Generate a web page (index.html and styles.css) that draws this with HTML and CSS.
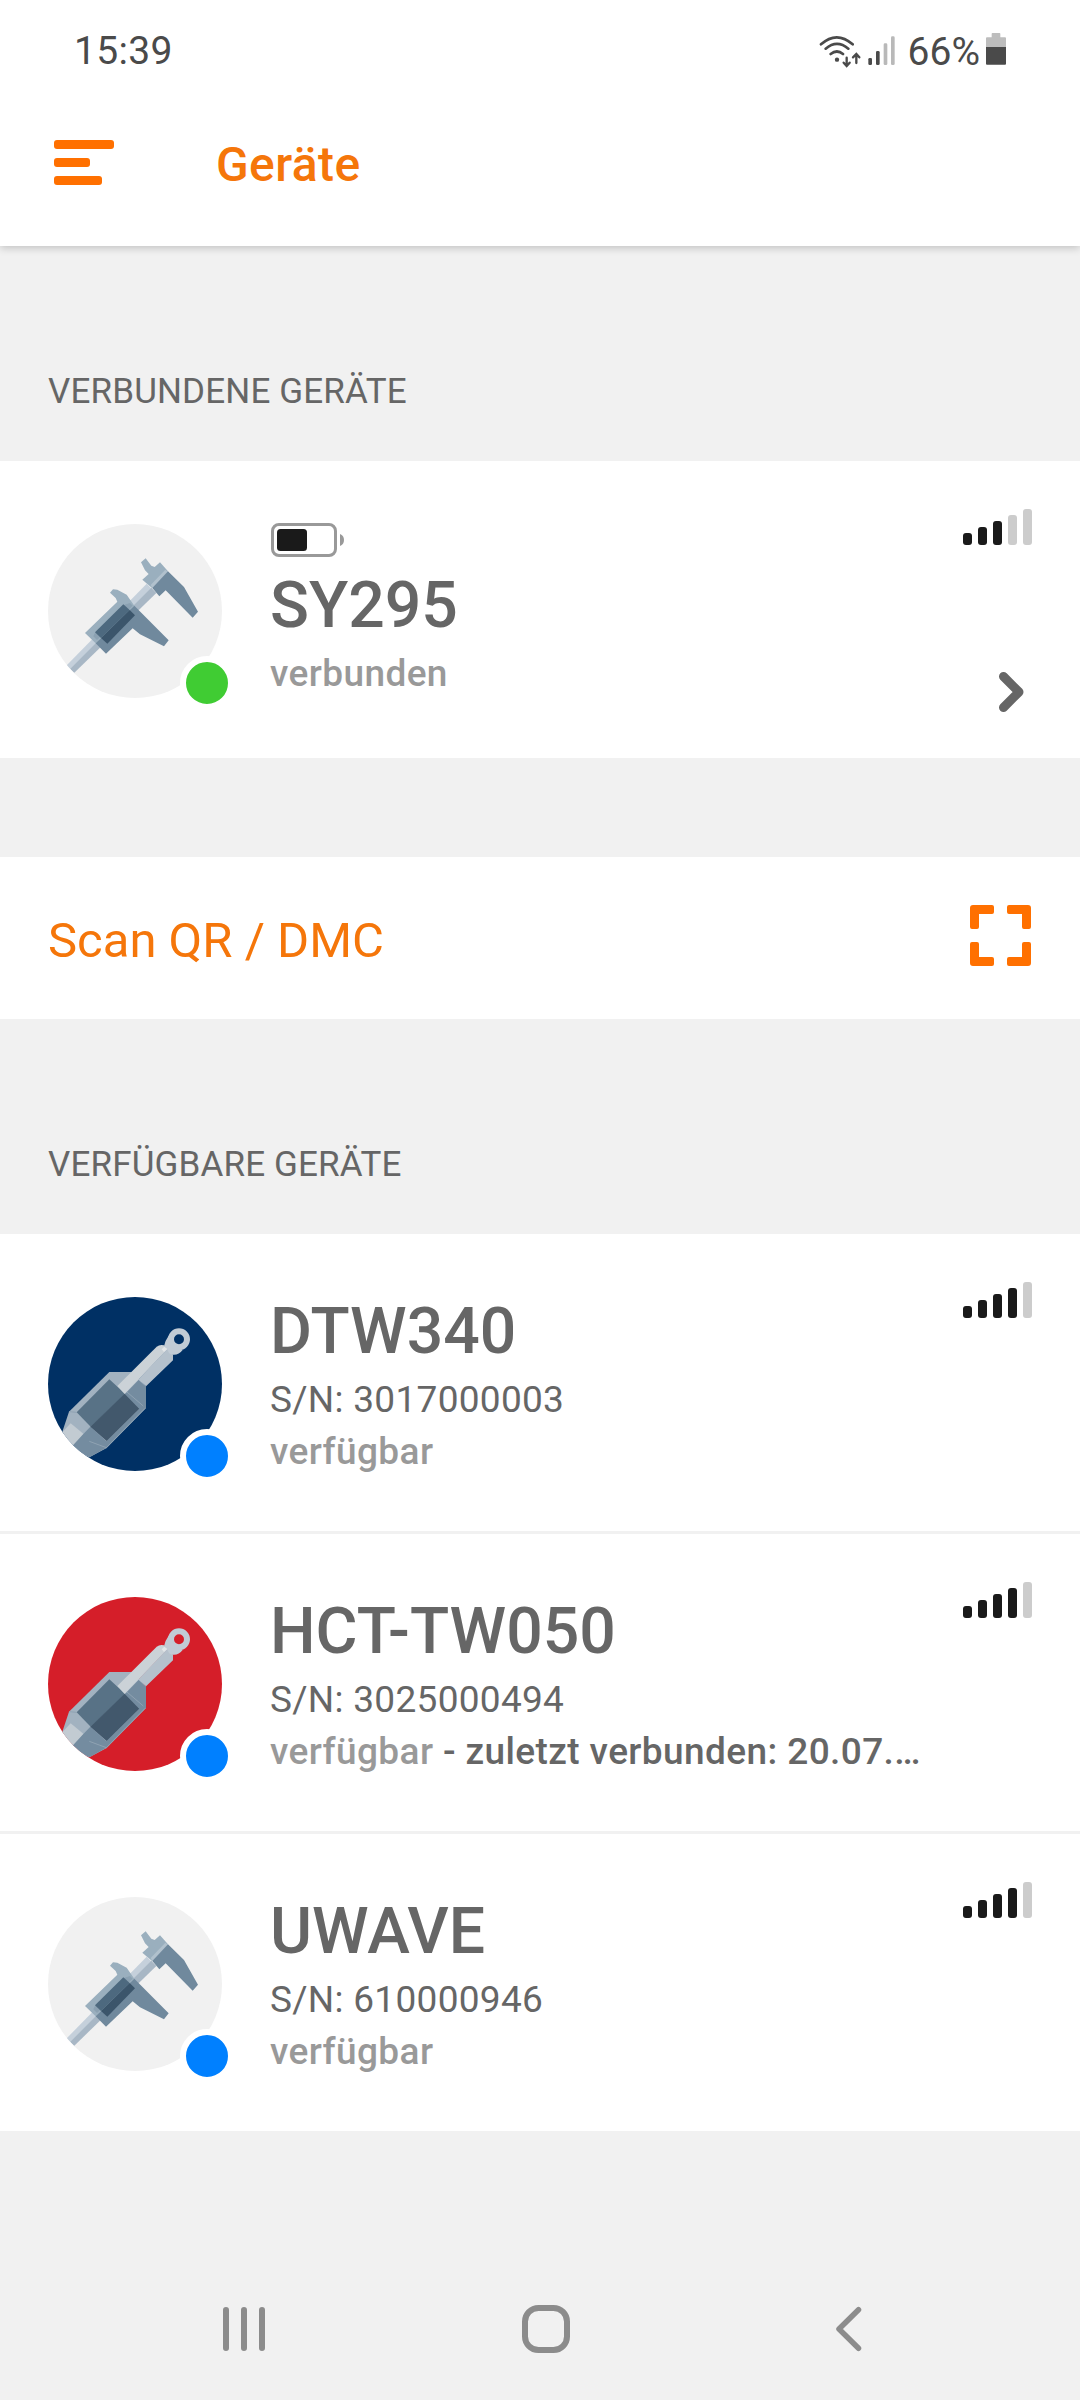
FILE: index.html
```html
<!DOCTYPE html>
<html lang="de">
<head>
<meta charset="utf-8">
<title>Geräte</title>
<link rel="stylesheet" href="styles.css">
</head>
<body>
<svg class="defs" width="0" height="0" aria-hidden="true">
  <defs>
    <symbol id="caliper" viewBox="54 71 522 522">
      <path fill="#c5d0db" d="M108 497 350 250 366 266 121 506z"/>
      <path fill="#a8b7c5" d="M120 506 364 262 379 278 133 517z"/>
      <path fill="#9aafbe" d="M165 398 262 304 257 293 240 277 249 267 262 268 290 283 313 316 197 429z"/>
      <path fill="#70899d" d="M197 429 313 316 416 420 402 438 330 402 308 384 228 460z"/>
      <path fill="#8ba1b2" d="M300 308 308 316 201 419 190 408 195 397 283 313z"/>
      <path fill="#4d697f" d="M195 396 280 312 299 329 213 413z"/>
      <path fill="#3b556b" d="M213 413 299 329 315 345 232 430z"/>
      <path fill="#9aafbe" d="M347 174 333 186 345 210 356 221 337 238 367 264 414 213 390 186 374 200 364 196z"/>
      <path fill="#b1c1cd" d="M362 254 406 208 414 215 368 264z"/>
      <path fill="#70899d" d="M367 263 414 213 462 260 504 334 488 352 407 270 388 288z"/>
    </symbol>
    <symbol id="holder" viewBox="54 81 522 522">
      <path fill="#a2b2c0" d="M92 500 117 425 238 306H308L348 350V414L230 534 178 562 132 545z"/>
      <path fill="#748ca0" d="M326 329 348 350V413L229 533 178 562 122 532 181 470 229 514 328 416 284 372z"/>
      <path fill="none" stroke="#8fa2b2" stroke-width="3" d="M345 415 229 533 178 514M272 350 340 408M140 427 117 425"/>
      <path fill="#c2cbd2" d="M92 492 122 460 160 491 127 528z"/>
      <path fill="#587286" d="M238 328 286 372 182 470 140 427z"/>
      <path fill="#42586c" d="M284 371 328 416 230 513 181 470z"/>
      <path fill="#cbd2d7" d="M262 348 380 230Q390 222 402 226L413 238 284 372z"/>
      <path fill="#b5c1cc" d="M284 371 411 238 429 254V271L348 349 326 329z"/>
      <path fill="#c1cbd5" d="M416 197Q406 210 402 229L414 242Q416 252 428 254 446 256 458 240L432 225z"/>
      <circle cx="447" cy="208" r="24" fill="none" stroke="#c1cbd5" stroke-width="18"/>
      <path fill="#e3e6e8" d="m403 230 9 7-10 9-7-8z"/>
    </symbol>
  </defs>
</svg>

<div class="screen">
  <header class="header">
    <div class="status-bar">
      <span class="clock">15:39</span>
      <div class="status-icons">
        <svg class="wifi" viewBox="114 96 126 99" fill="none" stroke="#4a4a4a" stroke-width="8" stroke-linecap="round">
          <path d="M120 124Q167 82 215 124M134 137Q168 108 202 137M149 153Q168 138 186 153"/>
          <circle cx="168" cy="170" r="6.5" fill="#4a4a4a" stroke="none"/>
          <path stroke-width="7" d="M197 164V187M188 179 197 189 206 179M226 180V155M216 163 226 153 235 163"/>
        </svg>
        <svg class="cell" viewBox="261 105 81 90">
          <rect x="262" y="171" width="11" height="21" rx="4" fill="#4a4a4a"/>
          <rect x="285" y="150" width="11" height="42" rx="4" fill="#4a4a4a"/>
          <rect x="308" y="127" width="11" height="65" rx="4" fill="#b9b9b9"/>
          <rect x="330" y="106" width="11" height="86" rx="4" fill="#b9b9b9"/>
        </svg>
        <span class="percent">66%</span>
        <svg class="power" viewBox="618 99 60 96">
          <path fill="#bdbdbd" d="M637 99H659Q661 99 661 102V112H675Q678 112 678 115V142H618V115Q618 112 621 112H635V102Q635 99 637 99z"/>
          <path fill="#4a4a4a" d="M618 141H678V191Q678 194 675 194H621Q618 194 618 191z"/>
        </svg>
      </div>
    </div>
    <div class="app-bar">
      <div class="menu"><i class="line long"></i><i class="line short"></i><i class="line medium"></i></div>
      <h1 class="title">Geräte</h1>
    </div>
  </header>

  <main>
    <h2 class="section">VERBUNDENE GERÄTE</h2>
    <section class="list">
      <article class="device connected">
        <div class="avatar grey"><svg class="picture"><use href="#caliper"/></svg><i class="dot green"></i></div>
        <div class="info">
          <svg class="battery" width="74" height="34" viewBox="0 0 74 34">
            <rect x="1.5" y="1.5" width="63" height="31" rx="6.5" fill="none" stroke="#999" stroke-width="3"/>
            <rect x="6" y="6" width="30" height="22" rx="3.5" fill="#1a1a1a"/>
            <path d="M69 11Q73 12.500 73 17T69 23z" fill="#999"/>
          </svg>
          <div class="name">SY295</div>
          <div class="state">verbunden</div>
        </div>
        <div class="side">
          <div class="signal"><i class="bar b1"></i><i class="bar b2"></i><i class="bar b3"></i><i class="bar b4 off"></i><i class="bar b5 off"></i></div>
          <svg class="chevron" width="28" height="42" viewBox="0 0 28 42"><path d="M5.500 5.500 21 21 5.500 36.500" fill="none" stroke="#666" stroke-width="9" stroke-linecap="round" stroke-linejoin="round"/></svg>
        </div>
      </article>
    </section>

    <section class="scan">
      <span class="scan-label">Scan QR / DMC</span>
      <svg class="scan-icon" width="61" height="61" viewBox="0 0 61 61" fill="#ff7000">
        <path d="M3 0H22Q24 0 24 2V7Q24 9 22 9H9V22Q9 24 7 24H2Q0 24 0 22V3Q0 0 3 0z"/>
        <path d="M58 0H39Q37 0 37 2V7Q37 9 39 9H52V22Q52 24 54 24H59Q61 24 61 22V3Q61 0 58 0z"/>
        <path d="M3 61H22Q24 61 24 59V54Q24 52 22 52H9V39Q9 37 7 37H2Q0 37 0 39V58Q0 61 3 61z"/>
        <path d="M58 61H39Q37 61 37 59V54Q37 52 39 52H52V39Q52 37 54 37H59Q61 37 61 39V58Q61 61 58 61z"/>
      </svg>
    </section>

    <h2 class="section">VERFÜGBARE GERÄTE</h2>
    <section class="list">
      <article class="device">
        <div class="avatar navy"><svg class="picture"><use href="#holder"/></svg><i class="dot blue"></i></div>
        <div class="info">
          <div class="name">DTW340</div>
          <div class="serial">S/N: 3017000003</div>
          <div class="state">verfügbar</div>
        </div>
        <div class="side">
          <div class="signal"><i class="bar b1"></i><i class="bar b2"></i><i class="bar b3"></i><i class="bar b4"></i><i class="bar b5 off"></i></div>
        </div>
      </article>
      <article class="device">
        <div class="avatar red"><svg class="picture"><use href="#holder"/></svg><i class="dot blue"></i></div>
        <div class="info">
          <div class="name">HCT-TW050</div>
          <div class="serial">S/N: 3025000494</div>
          <div class="state">verfügbar <span class="last-seen">- zuletzt verbunden: 20.07.…</span></div>
        </div>
        <div class="side">
          <div class="signal"><i class="bar b1"></i><i class="bar b2"></i><i class="bar b3"></i><i class="bar b4"></i><i class="bar b5 off"></i></div>
        </div>
      </article>
      <article class="device">
        <div class="avatar grey"><svg class="picture"><use href="#caliper"/></svg><i class="dot blue"></i></div>
        <div class="info">
          <div class="name">UWAVE</div>
          <div class="serial">S/N: 610000946</div>
          <div class="state">verfügbar</div>
        </div>
        <div class="side">
          <div class="signal"><i class="bar b1"></i><i class="bar b2"></i><i class="bar b3"></i><i class="bar b4"></i><i class="bar b5 off"></i></div>
        </div>
      </article>
    </section>
  </main>

  <nav class="nav">
    <svg width="48" height="48" viewBox="0 0 48 48" stroke="#8c8c8c" stroke-width="6" stroke-linecap="round"><path d="M6 5V43M24 5V43M42 5V43"/></svg>
    <svg width="48" height="48" viewBox="0 0 48 48" fill="none" stroke="#8c8c8c" stroke-width="6"><rect x="3" y="3" width="42" height="42" rx="13.500"/></svg>
    <svg width="48" height="48" viewBox="0 0 48 48" fill="none" stroke="#8c8c8c" stroke-width="5.500" stroke-linecap="round" stroke-linejoin="round"><path d="M35.500 4.700 16 24 35.500 43.300"/></svg>
  </nav>
</div>
</body>
</html>
```
FILE: styles.css
```css
* {
  box-sizing: border-box;
}

body {
  margin: 0;
  background: #f1f1f1;
  color: #666;
  font-family: Roboto, sans-serif;
}

.defs {
  display: block;
}

.screen {
  display: flex;
  flex-direction: column;
  width: 1080px;
  height: 2400px;
}

.header {
  height: 246px;
  background: #fff;
  box-shadow: 0 2px 8px rgba(0, 0, 0, 0.2);
}

.status-bar {
  display: flex;
  justify-content: space-between;
  align-items: center;
  height: 102px;
  padding: 0 74px 0 74px;
  color: #4a4a4a;
  font-size: 39px;
  line-height: 46px;
}

.clock {
  letter-spacing: 0.3px;
}

.status-icons {
  display: flex;
  align-items: center;
}

.wifi {
  width: 42px;
  height: 33px;
  margin-right: 7px;
}

.cell {
  width: 27px;
  height: 30px;
}

.percent {
  margin: 1px 6px 0 13px;
}

.power {
  width: 20px;
  height: 32px;
  margin-bottom: 4px;
}

.app-bar {
  display: flex;
  align-items: center;
  height: 144px;
  padding: 0 54px 23px;
}

.menu {
  display: flex;
  flex-direction: column;
  gap: 9px;
  width: 162px;
}

.line {
  height: 9px;
  border-radius: 3px;
  background: #ff7000;
}

.long {
  width: 60px;
}

.short {
  width: 36px;
}

.medium {
  width: 48px;
}

.title {
  margin: 4px 0 0;
  color: #f5760a;
  font-size: 48px;
  font-weight: 500;
  line-height: 56px;
  letter-spacing: 0.4px;
}

.section {
  height: 215px;
  margin: 0;
  padding: 125px 48px 0;
  font-size: 35px;
  font-weight: 400;
  line-height: 42px;
  letter-spacing: 0.15px;
}

.list {
  display: flex;
  flex-direction: column;
  gap: 3px;
}

.device {
  display: flex;
  height: 297px;
  padding: 0 48px;
  background: #fff;
}

.avatar {
  position: relative;
  width: 174px;
  height: 174px;
  margin-top: 63px;
  border-radius: 50%;
}

.grey {
  background: #f1f1f1;
}

.navy {
  background: #003064;
}

.red {
  background: #d51e29;
}

.picture {
  display: block;
  width: 174px;
  height: 174px;
  border-radius: 50%;
}

.dot {
  position: absolute;
  right: -12px;
  bottom: -12px;
  width: 54px;
  height: 54px;
  border: 6px solid #fff;
  border-radius: 50%;
}

.green {
  background: #40cc33;
}

.blue {
  background: #0080ff;
}

.info {
  flex: 1;
  padding: 54px 0 0 49px;
  white-space: nowrap;
}

.connected .info {
  padding-top: 62px;
}

.battery {
  display: block;
  margin-bottom: 5px;
}

.name {
  margin-left: -1px;
  font-size: 64.3px;
  font-weight: 500;
  line-height: 86px;
}

.serial,
.state {
  margin-left: -1px;
  font-size: 37px;
  line-height: 52px;
  letter-spacing: 0.3px;
}

.state {
  color: #999;
  font-weight: 500;
  letter-spacing: 0.4px;
}

.last-seen {
  color: #666;
}

.side {
  display: flex;
  flex-direction: column;
  align-items: flex-end;
  justify-content: space-between;
  padding: 48px 0 45px;
}

.signal {
  display: flex;
  align-items: flex-end;
  gap: 6px;
}

.bar {
  width: 9px;
  border-radius: 3px;
  background: #1a1a1a;
}

.b1 {
  height: 12px;
}

.b2 {
  height: 18px;
}

.b3 {
  height: 24px;
}

.b4 {
  height: 30px;
}

.b5 {
  height: 36px;
}

.off {
  background: #ccc;
}

.chevron {
  margin-right: 6px;
}

.scan {
  display: flex;
  align-items: center;
  justify-content: space-between;
  height: 162px;
  margin-top: 99px;
  padding: 0 49px 0 48px;
  background: #fff;
}

.scan-label {
  margin-top: 5px;
  color: #f5760a;
  font-size: 49px;
  line-height: 56px;
}

.scan-icon {
  margin-bottom: 6px;
}

.nav {
  display: flex;
  justify-content: space-between;
  margin-top: auto;
  padding: 0 209px 47px 220px;
}
```
